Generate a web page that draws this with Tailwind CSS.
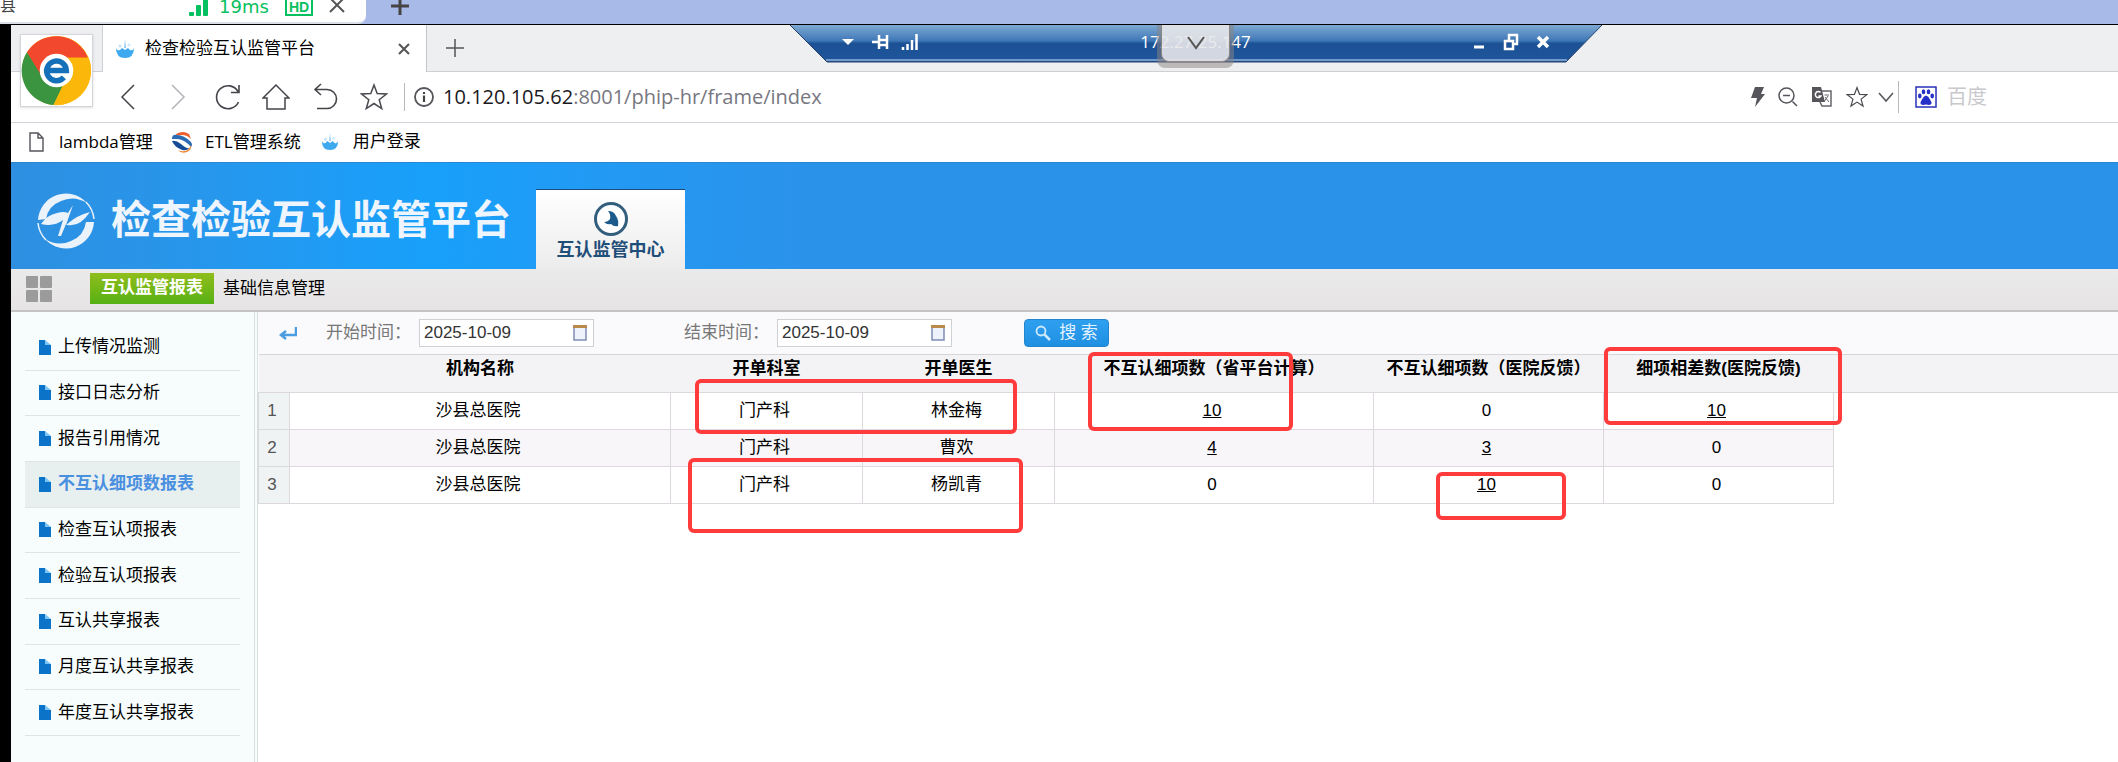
<!DOCTYPE html>
<html lang="zh-CN">
<head>
    <meta charset="UTF-8">
    <meta name="viewport" content="width=device-width, initial-scale=1.0">
    <title>检查检验互认监管平台</title>
    <script src="https://cdn.jsdelivr.net/npm/@tailwindcss/browser@4"></script>
</head>
<body class="min-h-screen flex flex-col overflow-x-hidden bg-white text-[17px] leading-6 text-black font-['Liberation_Sans','Noto_Sans_CJK_SC',sans-serif]">

    <!-- Icons used more than once -->
    <svg class="hidden">
        <symbol id="icon-doc" viewBox="0 0 12 15">
            <path d="M0 0H6V5H12V15H0Z" fill="#0b74c9"/>
            <path d="M6 0L12 5H6Z" fill="#7cc4f5"/>
        </symbol>
        <symbol id="icon-star" viewBox="0 0 28 28">
            <path d="M14 2L17.2 10.6L26.4 11L19.2 16.7L21.7 25.6L14 20.5L6.3 25.6L8.8 16.7L1.6 11L10.8 10.6Z" fill="none" stroke="#4a4a50" stroke-width="1.5"/>
        </symbol>
        <symbol id="icon-drop" viewBox="0 0 20 20">
            <path d="M1 9Q2 12 5 11L7 9L10 11L13 9L15 11Q18 12 19 9Q19 19 10 19Q1 19 1 9Z" fill="#3fa9ef"/>
            <path d="M10 0L11 9H9Z" fill="#8ccaf5"/>
            <circle cx="5" cy="7" r="1.500" fill="#bfe2fa"/>
            <circle cx="14" cy="6" r="1.500" fill="#cfe9fb"/>
        </symbol>
        <symbol id="icon-calendar" viewBox="0 0 14 16">
            <rect x="1" y="1" width="12" height="14" fill="#eef2fa" stroke="#7f8cb5" stroke-width="1.5"/>
            <path d="M0 1.5H14" stroke="#b98a4a" stroke-width="3"/>
        </symbol>
    </svg>

    <!-- Client tab bar -->
    <div class="h-[25px] flex shrink-0 overflow-hidden bg-[#a8bbe8] border-b border-black">
        <div class="w-[366px] h-6 flex items-start bg-white border-b-2 border-[#dcdfe8] rounded-br-lg">
            <span class="w-[189px] -mt-1.5 text-base text-[#444]">县</span>
            <svg class="w-5 h-4" viewBox="0 0 20 16">
                <rect x="0" y="12" width="5" height="4" rx="1" fill="#07c160"/>
                <rect x="7" y="5" width="5" height="11" rx="1" fill="#07c160"/>
                <rect x="14" y="-2" width="5" height="18" rx="1" fill="#07c160"/>
            </svg>
            <span class="ml-2.5 -mt-[5px] w-16 text-lg leading-6 text-[#07c160] font-['DejaVu_Sans',sans-serif]">19ms</span>
            <span class="ml-0.5 -mt-1 w-7 h-5 border-2 border-[#07c160] text-sm leading-[18px] text-center font-bold text-[#07c160]">HD</span>
            <button class="ml-4" aria-label="关闭标签">
                <svg class="w-4 h-4" viewBox="0 0 16 16"><path d="M1 -2L15 12M15 -2L1 12" stroke="#555" stroke-width="2"/></svg>
            </button>
        </div>
        <button class="ml-6 -mt-3" aria-label="新建标签">
            <svg class="w-5 h-5" viewBox="0 0 20 20"><path d="M10 1V19M1 10H19" stroke="#444" stroke-width="3"/></svg>
        </button>
    </div>

    <div class="grow flex flex-col border-l-[11px] border-black relative">

        <!-- Browser tabs -->
        <div class="h-[47px] shrink-0 flex bg-[#eeeff1] border-b border-[#cfcfd6]">
            <div class="w-[92px] border-r border-[#cfcfd6]"></div>
            <div class="w-[324px] -mb-px flex items-center bg-white border-r border-[#c4c4cc] pl-3 pr-4">
                <svg class="w-5 h-5"><use href="#icon-drop"/></svg>
                <span class="ml-2.5 grow">检查检验互认监管平台</span>
                <button aria-label="关闭">
                    <svg class="w-3 h-3" viewBox="0 0 12 12"><path d="M1 1L11 11M11 1L1 11" stroke="#555" stroke-width="2"/></svg>
                </button>
            </div>
            <button class="ml-[18px]" aria-label="新标签页">
                <svg class="w-5 h-5" viewBox="0 0 20 20"><path d="M10 1V19M1 10H19" stroke="#555" stroke-width="1.5"/></svg>
            </button>
        </div>

        <!-- Browser logo -->
        <div class="absolute left-[9px] top-[9px] w-[73px] h-[73px] bg-white border border-[#d5d5dc] shadow">
            <svg class="w-[71px] h-[71px]" viewBox="0 0 72 72">
                <circle cx="36" cy="36" r="35" fill="#fbbc05"/>
                <path d="M36 36L20 43L6 17.500A35 35 0 0 1 68 23H36Z" fill="#f2492e"/>
                <path d="M6 17.500A35 35 0 0 0 33 71L44 48L36 36L20 40Z" fill="#3a9440"/>
                <path d="M36 23H68.500A35 35 0 0 1 33 71L45 46Z" fill="#fbb80a"/>
                <circle cx="36" cy="36" r="17" fill="#fff"/>
                <path d="M26 36H46A10 10 0 1 0 43.500 43" fill="none" stroke="#1470b8" stroke-width="5.500"/>
            </svg>
        </div>

        <!-- Remote desktop connection bar -->
        <div class="absolute left-[779px] top-0 w-[812px] h-[38px]">
            <svg class="absolute inset-0 w-full h-full" viewBox="0 0 812 38" preserveAspectRatio="none">
                <defs>
                    <linearGradient id="rdp" x1="0" y1="0" x2="0" y2="1">
                        <stop offset="0" stop-color="#7fa9d3"/>
                        <stop offset="0.42" stop-color="#3f78b7"/>
                        <stop offset="0.5" stop-color="#1c5195"/>
                        <stop offset="1" stop-color="#1f559b"/>
                    </linearGradient>
                </defs>
                <path d="M0 0H812L776 37H37Z" fill="url(#rdp)"/>
                <path d="M0 0L37 37H776L812 0" fill="none" stroke="#27406b"/>
                <path d="M36 35H777" stroke="#8fb0d8" stroke-width="1.500"/>
            </svg>
            <div class="relative h-[34px] flex items-center text-white">
                <svg class="ml-[51px] w-20 h-5" viewBox="0 0 80 20">
                    <path d="M1 7H13L7 13Z" fill="#fff"/>
                    <path d="M31 10H38M38 3V17M39 8H46V13H39M46 3V17" fill="none" stroke="#fff" stroke-width="2.500"/>
                    <path d="M62 15V18M66.500 12V18M71 8V18M75.500 2V18" stroke="#fff" stroke-width="2.500"/>
                </svg>
                <span class="grow text-center font-['Open_Sans',sans-serif]">172.27.25.147</span>
                <svg class="mr-[52px] w-20 h-5" viewBox="0 0 80 20">
                    <path d="M4 15H14" stroke="#fff" stroke-width="3"/>
                    <path d="M35 9H43V17H35ZM39 8V3H47V12H44" fill="none" stroke="#fff" stroke-width="2.500"/>
                    <path d="M68 5L78 15M78 5L68 15" stroke="#fff" stroke-width="3.500"/>
                </svg>
            </div>
            <button class="absolute left-[367px] top-0 w-[77px] h-[43px] px-1 pb-1.5 rounded-b-lg bg-[#8c8480]/50" aria-label="展开">
                <span class="h-full flex items-center justify-center rounded-b-lg border border-t-0 border-[#8b8680] bg-[#f2f3f6]/80">
                    <svg class="w-[18px] h-4" viewBox="0 0 18 16"><path d="M1 2L9 13L17 2" fill="none" stroke="#555" stroke-width="2"/></svg>
                </span>
            </button>
        </div>

        <!-- Address bar -->
        <div class="h-[51px] shrink-0 flex items-center border-b border-[#d4d4dc] pl-[109px]">
            <button aria-label="后退"><svg class="w-4 h-[26px]" viewBox="0 0 16 26"><path d="M14 1L2 13L14 25" fill="none" stroke="#44444a" stroke-width="1.500"/></svg></button>
            <button class="ml-[34px]" aria-label="前进"><svg class="w-4 h-[26px]" viewBox="0 0 16 26"><path d="M2 1L14 13L2 25" fill="none" stroke="#b5b5ba" stroke-width="1.500"/></svg></button>
            <button class="ml-7" aria-label="刷新"><svg class="w-7 h-7" viewBox="0 0 28 28"><path d="M24.500 19A11.500 11.500 0 1 1 24 8.500M25 2V9.500H17" fill="none" stroke="#44444a" stroke-width="1.600"/></svg></button>
            <button class="ml-5" aria-label="主页"><svg class="w-7 h-7" viewBox="0 0 28 28"><path d="M1 15L14 2L27 15H23V26H5V15Z" fill="none" stroke="#44444a" stroke-width="1.500"/></svg></button>
            <button class="ml-[22px]" aria-label="恢复"><svg class="w-7 h-7" viewBox="0 0 28 28"><path d="M9 1L3 6.500L9 12M3 6.500H15A9.500 9.500 0 0 1 15 25.500H5" fill="none" stroke="#44444a" stroke-width="1.600"/></svg></button>
            <button class="ml-5" aria-label="收藏"><svg class="w-7 h-7"><use href="#icon-star"/></svg></button>
            <span class="ml-4 w-px h-7 bg-[#b8b8be]"></span>
            <svg class="ml-2 w-[22px] h-[22px]" viewBox="0 0 22 22">
                <circle cx="11" cy="11" r="9" fill="none" stroke="#55555b" stroke-width="1.800"/>
                <path d="M11 6V8M11 9.500V16" stroke="#444" stroke-width="2.200"/>
            </svg>
            <span class="ml-2 grow text-xl font-['Open_Sans',sans-serif] text-[#77777f]"><span class="text-[#1a1a1e]">10.120.105.62</span>:8001/phip-hr/frame/index</span>
            <div class="w-[368px] flex items-center">
                <svg class="w-4 h-5" viewBox="0 0 16 20"><path d="M5 0H14L11 7H15L5 20L7 11H1Z" fill="#55555b"/></svg>
                <svg class="ml-3 w-5 h-5" viewBox="0 0 20 20"><path d="M14.500 14.500L19 19M5 8.500H12" stroke="#55555b" stroke-width="1.500"/><circle cx="8.500" cy="8.500" r="7.500" fill="none" stroke="#55555b" stroke-width="1.500"/></svg>
                <svg class="ml-3.5 w-5 h-5" viewBox="0 0 20 20">
                    <path d="M8 4H19V19H10L8 15" fill="#fff" stroke="#66666c" stroke-width="1.500"/>
                    <path d="M0 0H9L13 15H0Z" fill="#55555b"/>
                    <path d="M8.500 5.500A3 3 0 1 0 9 9H6.500" fill="none" stroke="#fff" stroke-width="1.500"/>
                    <path d="M12.500 8H17M16 9L12 15M13 10L17 15" stroke="#66666c" fill="none"/>
                </svg>
                <svg class="ml-3.5 w-[22px] h-[22px]"><use href="#icon-star"/></svg>
                <svg class="ml-2.5 w-4 h-4" viewBox="0 0 16 16"><path d="M1 4L8 12L15 4" fill="none" stroke="#55555b" stroke-width="1.500"/></svg>
                <span class="ml-1 w-px h-8 bg-[#b8b8be]"></span>
                <svg class="ml-4 w-[22px] h-[22px]" viewBox="0 0 22 22">
                    <rect x="1" y="1" width="20" height="20" fill="#fff" stroke="#2a31b8" stroke-width="1.500"/>
                    <g fill="#2430c8">
                        <ellipse cx="4.800" cy="10" rx="1.800" ry="2.400"/>
                        <ellipse cx="8.500" cy="5.800" rx="1.800" ry="2.500"/>
                        <ellipse cx="13.500" cy="5.800" rx="1.800" ry="2.500"/>
                        <ellipse cx="17.200" cy="10" rx="1.800" ry="2.400"/>
                        <path d="M11 9.500Q13.500 10 15 13.500Q18.500 18.500 14 19Q11 18 8 19Q3.500 18.500 7 13.500Q8.500 10 11 9.500Z"/>
                    </g>
                </svg>
                <input type="text" placeholder="百度" aria-label="搜索引擎" class="ml-2.5 w-24 text-xl leading-6 placeholder:text-[#c9c9cd] outline-none">
            </div>
        </div>

        <!-- Bookmarks -->
        <div class="h-[39px] shrink-0 flex items-center pl-[18px] pb-0.5">
            <a href="#" class="flex items-center">
                <svg class="w-[15px] h-5" viewBox="0 0 15 20"><path d="M1 1H9L14 6V19H1ZM9 1V6H14" fill="none" stroke="#55555b" stroke-width="1.400"/></svg>
                <span class="ml-[15px] w-24 font-['Open_Sans','Noto_Sans_CJK_SC',sans-serif] whitespace-nowrap">lambda管理</span>
            </a>
            <a href="#" class="ml-4 flex items-center">
                <svg class="w-[22px] h-[22px]" viewBox="0 0 22 22">
                    <path d="M5 3Q12 -1 18 3L20 8Q14 2 6 5Z" fill="#ee5f2d"/>
                    <path d="M1 8Q1 3 6 4Q13 4 20 11Q22 14 20 16Q13 8 6 8Q3 8 1 8Z" fill="#2b6cb5"/>
                    <path d="M1 10Q5 9 10 13Q15 18 19 17Q14 21 9 18Q3 15 1 10Z" fill="#164c96"/>
                    <path d="M7 19Q13 22 18 18L20 14Q21 19 16 21Q10 23 7 19Z" fill="#f08a3a"/>
                </svg>
                <span class="ml-3 font-['Open_Sans','Noto_Sans_CJK_SC',sans-serif] whitespace-nowrap">ETL管理系统</span>
            </a>
            <a href="#" class="ml-5 flex items-center">
                <svg class="w-[18px] h-[18px]"><use href="#icon-drop"/></svg>
                <span class="ml-3.5">用户登录</span>
            </a>
        </div>

        <!-- Platform header -->
        <header class="h-[107px] shrink-0 flex bg-linear-to-r from-[#2e8fe0] from-0% via-[#17a0fb] via-20% to-[#2b92ea] to-38% border-t border-[#2a86cf] pl-[25px]">
            <svg class="mt-7 w-[60px] h-[60px] shrink-0" viewBox="0 0 60 60" fill="#eaf2fb">
                <path d="M2 29A28 28 0 0 1 51 12Q38 4 25 10Q12 15 10 28Z"/>
                <path d="M58 31A28 28 0 0 1 9 48Q22 56 35 50Q48 45 50 31Z"/>
                <path d="M2 32A28 28 0 0 0 10 49M58 28A28 28 0 0 0 50 11" fill="none" stroke="#eaf2fb" stroke-width="1.500"/>
                <path d="M5 33Q11 24 21 22Q28 20 32 22L37 14L30 34Q41 24 54 21Q45 34 36 34Q31 35 30 33L25 45L22 45L27 29Q18 36 5 33Z"/>
            </svg>
            <h1 class="ml-[15px] mt-[35px] w-[425px] text-[40px] leading-[44px] font-bold text-[#eef5fd] whitespace-nowrap">检查检验互认监管平台</h1>
            <a href="#" class="mt-[26px] w-[149px] flex flex-col items-center bg-linear-to-b from-white to-[#ececec] border-t border-[#1b4c80] text-[#1f4e79]">
                <svg class="mt-3 w-[34px] h-[34px]" viewBox="0 0 34 34">
                    <circle cx="17" cy="17" r="15.500" fill="#fff" stroke="#335f7d" stroke-width="3"/>
                    <path d="M14 9Q20 9 22 14Q25 18 24 24Q20 25 17 22Q13 23 10 20Q14 20 16 17Q17 12 14 9Z" fill="#1d5a8c"/>
                </svg>
                <span class="mt-0.5 text-lg leading-6 font-bold">互认监管中心</span>
            </a>
        </header>

        <!-- Module menu -->
        <nav class="h-[43px] shrink-0 flex items-center bg-linear-to-b from-[#ebeaea] to-[#e6e4e5] border-b-2 border-[#c4c4c6] pl-[15px] pb-0.5">
            <svg class="w-[26px] h-[26px]" viewBox="0 0 26 26" fill="#9b9b9b">
                <rect width="12" height="12" rx="1"/><rect x="14" width="12" height="12" rx="1"/>
                <rect y="14" width="12" height="12" rx="1"/><rect x="14" y="14" width="12" height="12" rx="1"/>
            </svg>
            <a href="#" class="ml-[38px] w-[124px] h-[31px] leading-[30px] text-center font-bold text-white bg-linear-to-b from-[#8fbe1c] to-[#55b014]">互认监管报表</a>
            <a href="#" class="ml-[9px]">基础信息管理</a>
        </nav>

        <div class="grow flex">
            <!-- Report list -->
            <aside class="w-[247px] shrink-0 bg-[#f6fdfc] border-r-4 border-double border-[#d9dede] pt-[13px] px-3.5">
                <ul class="grid grid-rows-9 h-[411px] [&_a]:h-full [&_a]:flex [&_a]:items-center [&_a]:gap-[7px] [&_a]:pl-3.5 [&_li]:border-b [&_li]:border-[#dfe4e4] [&_svg]:w-3 [&_svg]:h-[15px]">
                    <li><a href="#"><svg><use href="#icon-doc"/></svg>上传情况监测</a></li>
                    <li><a href="#"><svg><use href="#icon-doc"/></svg>接口日志分析</a></li>
                    <li><a href="#"><svg><use href="#icon-doc"/></svg>报告引用情况</a></li>
                    <li class="bg-[#e8efef] text-[#4a90e0] font-bold"><a href="#"><svg><use href="#icon-doc"/></svg>不互认细项数报表</a></li>
                    <li><a href="#"><svg><use href="#icon-doc"/></svg>检查互认项报表</a></li>
                    <li><a href="#"><svg><use href="#icon-doc"/></svg>检验互认项报表</a></li>
                    <li><a href="#"><svg><use href="#icon-doc"/></svg>互认共享报表</a></li>
                    <li><a href="#"><svg><use href="#icon-doc"/></svg>月度互认共享报表</a></li>
                    <li><a href="#"><svg><use href="#icon-doc"/></svg>年度互认共享报表</a></li>
                </ul>
            </aside>

            <main class="grow min-w-0 relative">
                <!-- Search bar -->
                <form class="h-[42px] flex items-center bg-[#fafafc] pl-[21px]">
                    <svg class="w-[18px] h-3.5" viewBox="0 0 18 14"><path d="M17 1V9H3M7 5L2 9L7 13" fill="none" stroke="#4a9de0" stroke-width="2.500"/></svg>
                    <label for="startDate" class="ml-[29px] w-[93px] text-[#777] whitespace-nowrap">开始时间：</label>
                    <div class="w-[175px] h-7 flex items-center bg-white border border-[#cfcfd4] pl-1 pr-1.5">
                        <input type="text" id="startDate" value="2025-10-09" class="w-0 grow text-[#333] outline-none">
                        <svg class="w-3.5 h-4"><use href="#icon-calendar"/></svg>
                    </div>
                    <label for="endDate" class="ml-[90px] w-[93px] text-[#777] whitespace-nowrap">结束时间：</label>
                    <div class="w-[175px] h-7 flex items-center bg-white border border-[#cfcfd4] pl-1 pr-1.5">
                        <input type="text" id="endDate" value="2025-10-09" class="w-0 grow text-[#333] outline-none">
                        <svg class="w-3.5 h-4"><use href="#icon-calendar"/></svg>
                    </div>
                    <button type="button" class="ml-[72px] w-[85px] h-7 flex items-center justify-center gap-2 rounded-sm bg-linear-to-b from-[#2fa0f0] to-[#1f8fe2] border border-[#2385cc] text-[#e3f3ff]">
                        <svg class="w-4 h-4" viewBox="0 0 16 16"><circle cx="6" cy="6" r="4.500" fill="none" stroke="#cfeaff" stroke-width="1.800"/><path d="M9.500 9.500L15 15" stroke="#cfeaff" stroke-width="2.500"/></svg>
                        搜 索
                    </button>
                </form>

                <!-- Results -->
                <table class="w-full table-fixed border-collapse text-center [&_td]:p-0 [&_td]:pr-1 [&_th]:p-0 [&_tbody_tr]:h-[37px] [&_tbody_td:not(:last-child)]:border [&_tbody_td:not(:last-child)]:border-[#ddd7de] [&_tbody_td:first-child]:bg-[#eff3f3] [&_tbody_td:first-child]:text-[#555] [&_td]:whitespace-nowrap [&_a]:underline">
                    <colgroup>
                        <col class="w-[31px]"><col class="w-[381px]"><col class="w-[192px]"><col class="w-[192px]"><col class="w-[319px]"><col class="w-[230px]"><col class="w-[230px]"><col>
                    </colgroup>
                    <thead>
                        <tr class="h-[38px] bg-[#f3f3f5] border-y border-[#d6d6da] align-top whitespace-nowrap [&_th]:font-bold [&_th]:pt-0.5">
                            <th></th>
                            <th>机构名称</th>
                            <th>开单科室</th>
                            <th>开单医生</th>
                            <th>不互认细项数（省平台计算）</th>
                            <th>不互认细项数（医院反馈）</th>
                            <th>细项相差数(医院反馈)</th>
                            <th></th>
                        </tr>
                    </thead>
                    <tbody>
                        <tr>
                            <td>1</td><td>沙县总医院</td><td>门产科</td><td>林金梅</td><td><a href="#">10</a></td><td>0</td><td><a href="#">10</a></td><td></td>
                        </tr>
                        <tr class="[&_td:not(:last-child)]:bg-[#f8f6f9]">
                            <td>2</td><td>沙县总医院</td><td>门产科</td><td>曹欢</td><td><a href="#">4</a></td><td><a href="#">3</a></td><td>0</td><td></td>
                        </tr>
                        <tr>
                            <td>3</td><td>沙县总医院</td><td>门产科</td><td>杨凯青</td><td>0</td><td><a href="#">10</a></td><td>0</td><td></td>
                        </tr>
                    </tbody>
                </table>

                <!-- Highlight marks -->
                <div class="absolute left-[437px] top-[67px] w-[322px] h-[55px] border-4 border-[#ff3b3b] rounded-md"></div>
                <div class="absolute left-[430px] top-[146px] w-[335px] h-[75px] border-4 border-[#ff3b3b] rounded-md"></div>
                <div class="absolute left-[830px] top-[40px] w-[205px] h-[79px] border-4 border-[#ff3b3b] rounded-md"></div>
                <div class="absolute left-[1346px] top-[35px] w-[238px] h-[78px] border-4 border-[#ff3b3b] rounded-md"></div>
                <div class="absolute left-[1178px] top-[160px] w-[130px] h-[48px] border-4 border-[#ff3b3b] rounded-md"></div>
            </main>
        </div>
    </div>

</body>
</html>
